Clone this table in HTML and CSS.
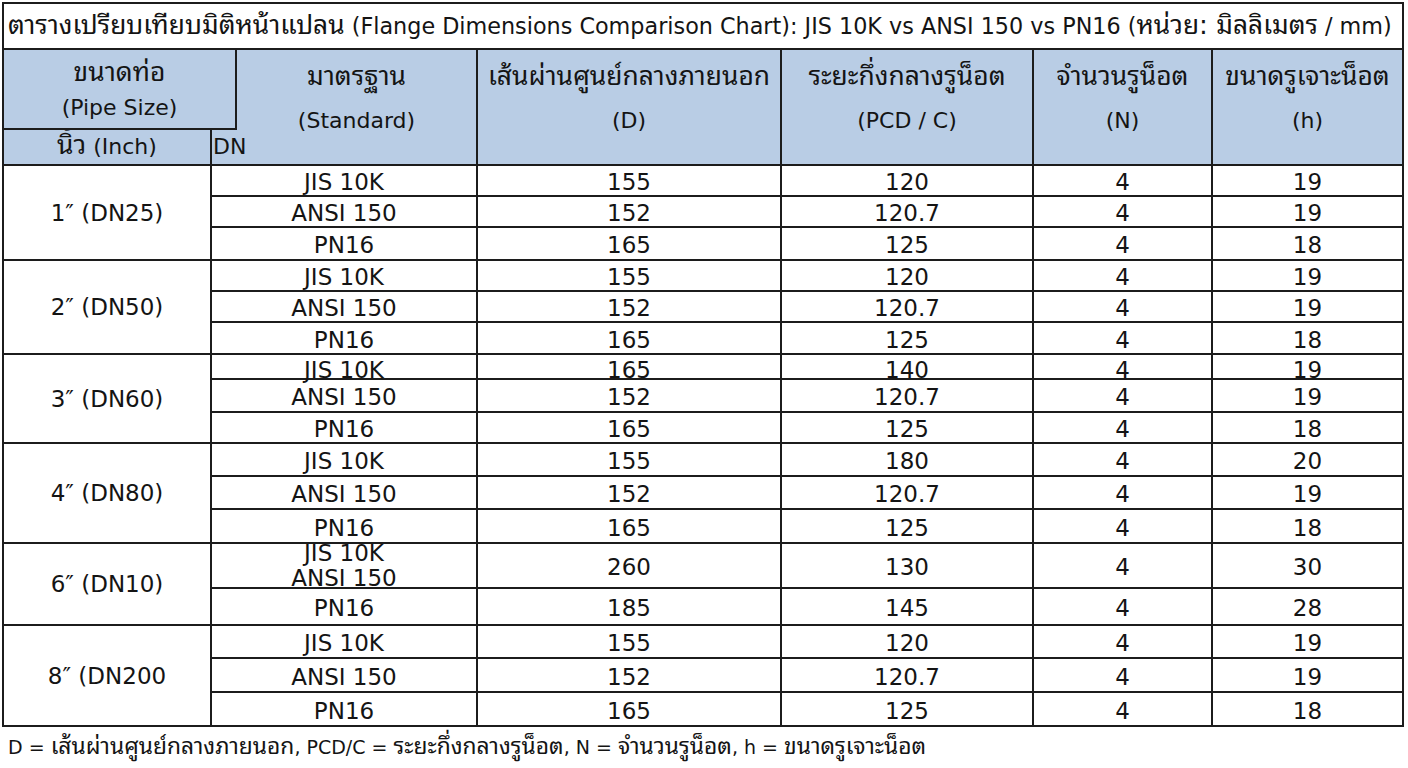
FILE: index.html
```html
<!DOCTYPE html>
<html lang="th">
<head>
<meta charset="utf-8">
<title>Flange Dimensions Comparison Chart</title>
<link rel="stylesheet" href="styles.css">
</head>
<body>
<div class="chart">
  <div class="title"><span class="th">ตารางเปรียบเทียบมิติหน้าแปลน</span> (Flange Dimensions Comparison Chart): JIS 10K vs ANSI 150 vs PN16 (<span class="th">หน่วย: มิลลิเมตร</span> / mm)</div>
  <div class="head">
    <div class="h-pipe"><span class="th">ขนาดท่อ</span><span>(Pipe Size)</span></div>
    <div class="h-inch"><span><span class="th">นิ้ว</span> (Inch)</span></div>
    <div class="h-std"><span class="th">มาตรฐาน</span><span>(Standard)</span></div>
    <div class="h-dn">DN</div>
    <div class="h-col"><span class="th">เส้นผ่านศูนย์กลางภายนอก</span><span>(D)</span></div>
    <div class="h-col"><span class="th">ระยะกึ่งกลางรูน็อต</span><span>(PCD / C)</span></div>
    <div class="h-col"><span class="th">จำนวนรูน็อต</span><span>(N)</span></div>
    <div class="h-col last"><span class="th">ขนาดรูเจาะน็อต</span><span>(h)</span></div>
  </div>
  <div class="body">
    <div class="size g3">1″ (DN25)</div>
    <div class="c">JIS 10K</div><div class="c">155</div><div class="c">120</div><div class="c">4</div><div class="c last">19</div>
    <div class="c">ANSI 150</div><div class="c">152</div><div class="c">120.7</div><div class="c">4</div><div class="c last">19</div>
    <div class="c">PN16</div><div class="c">165</div><div class="c">125</div><div class="c">4</div><div class="c last">18</div>

    <div class="size g3">2″ (DN50)</div>
    <div class="c">JIS 10K</div><div class="c">155</div><div class="c">120</div><div class="c">4</div><div class="c last">19</div>
    <div class="c">ANSI 150</div><div class="c">152</div><div class="c">120.7</div><div class="c">4</div><div class="c last">19</div>
    <div class="c">PN16</div><div class="c">165</div><div class="c">125</div><div class="c">4</div><div class="c last">18</div>

    <div class="size g3">3″ (DN60)</div>
    <div class="c tight">JIS 10K</div><div class="c tight">165</div><div class="c tight">140</div><div class="c tight">4</div><div class="c tight last">19</div>
    <div class="c">ANSI 150</div><div class="c">152</div><div class="c">120.7</div><div class="c">4</div><div class="c last">19</div>
    <div class="c">PN16</div><div class="c">165</div><div class="c">125</div><div class="c">4</div><div class="c last">18</div>

    <div class="size g3">4″ (DN80)</div>
    <div class="c">JIS 10K</div><div class="c">155</div><div class="c">180</div><div class="c">4</div><div class="c last">20</div>
    <div class="c">ANSI 150</div><div class="c">152</div><div class="c">120.7</div><div class="c">4</div><div class="c last">19</div>
    <div class="c">PN16</div><div class="c">165</div><div class="c">125</div><div class="c">4</div><div class="c last">18</div>

    <div class="size g2">6″ (DN10)</div>
    <div class="c two"><span>JIS 10K</span><span>ANSI 150</span></div><div class="c">260</div><div class="c">130</div><div class="c">4</div><div class="c last">30</div>
    <div class="c">PN16</div><div class="c">185</div><div class="c">145</div><div class="c">4</div><div class="c last">28</div>

    <div class="size g3">8″ (DN200</div>
    <div class="c">JIS 10K</div><div class="c">155</div><div class="c">120</div><div class="c">4</div><div class="c last">19</div>
    <div class="c">ANSI 150</div><div class="c">152</div><div class="c">120.7</div><div class="c">4</div><div class="c last">19</div>
    <div class="c">PN16</div><div class="c">165</div><div class="c">125</div><div class="c">4</div><div class="c last">18</div>
  </div>
</div>
<p class="note">D = <span class="th">เส้นผ่านศูนย์กลางภายนอก</span>, PCD/C = <span class="th">ระยะกึ่งกลางรูน็อต</span>, N = <span class="th">จำนวนรูน็อต</span>, h = <span class="th">ขนาดรูเจาะน็อต</span></p>
</body>
</html>
```

FILE: styles.css
```css
* { box-sizing: border-box; }

html, body {
  margin: 0;
  padding: 0;
  background: #ffffff;
}

body {
  font-family: "DejaVu Sans", "Noto Sans Thai Looped", "Noto Sans Thai", "Noto Sans", sans-serif;
  color: #141414;
}

.th {
  font-size: 1.2em;
  line-height: 1;
}

.chart {
  margin: 2px 0 0 2px;
  width: 1402px;
  border: 2px solid #1c1c1c;
  border-bottom: 0;
}

.title {
  height: 46px;
  border-bottom: 2px solid #1c1c1c;
  padding-left: 4px;
  font-size: 22.3px;
  line-height: 44px;
  white-space: nowrap;
}

.title .th { font-size: 1.18em; }

.head {
  display: grid;
  grid-template-columns: 208px 25px 241px 304px 252px 179px 189px;
  grid-template-rows: 80px 36px;
  background: #b9cde5;
  font-size: 22px;
}

.head > div {
  display: flex;
  flex-direction: column;
  align-items: center;
}

.head > div > span {
  display: block;
}

.h-pipe {
  grid-column: 1 / 3;
  grid-row: 1;
  z-index: 2;
  background: #b9cde5;
  border-right: 2px solid #1c1c1c;
  border-bottom: 2px solid #1c1c1c;
  padding-top: 4px;
  line-height: 36px;
}

.h-pipe > span { height: 36px; line-height: 36px; }

.h-inch {
  grid-column: 1;
  grid-row: 2;
  border-right: 2px solid #1c1c1c;
  border-bottom: 2px solid #1c1c1c;
  line-height: 34px;
}

.h-std {
  grid-column: 2 / 4;
  grid-row: 1 / 3;
  border-right: 2px solid #1c1c1c;
  border-bottom: 2px solid #1c1c1c;
  padding-left: 25px;
  padding-top: 3px;
}

.h-std > span, .h-col > span { height: 45px; line-height: 45px; }

.head > .h-dn {
  grid-column: 2 / 4;
  grid-row: 2;
  z-index: 1;
  align-items: flex-start;
  padding-left: 1px;
  line-height: 34px;
}

.h-col {
  grid-row: 1 / 3;
  border-right: 2px solid #1c1c1c;
  border-bottom: 2px solid #1c1c1c;
  padding-top: 3px;
  white-space: nowrap;
}

.h-col.last { border-right: 0; }

.body {
  display: grid;
  grid-template-columns: 208px 266px 304px 252px 179px 189px;
  grid-template-rows: 31px 31px 33px 31px 31px 32px 25px 33px 31px 33px 33px 34px 45px 37px 33px 34px 34px;
  font-size: 23px;
}

.body > div {
  display: flex;
  align-items: center;
  justify-content: center;
  border-right: 2px solid #1c1c1c;
  border-bottom: 2px solid #1c1c1c;
  white-space: nowrap;
}

.body > .last { border-right: 0; }

.c {
  line-height: 24px;
  padding-top: 3px;
}

.c.tight { padding-top: 6px; }

.body > .two {
  flex-direction: column;
  line-height: 25px;
  padding-top: 0;
}

.size { grid-column: 1; }
.size.g3 { grid-row: span 3; }
.size.g2 { grid-row: span 2; }

.note {
  margin: 5px 0 0 8px;
  font-size: 19px;
  line-height: 30px;
  white-space: nowrap;
}
```
